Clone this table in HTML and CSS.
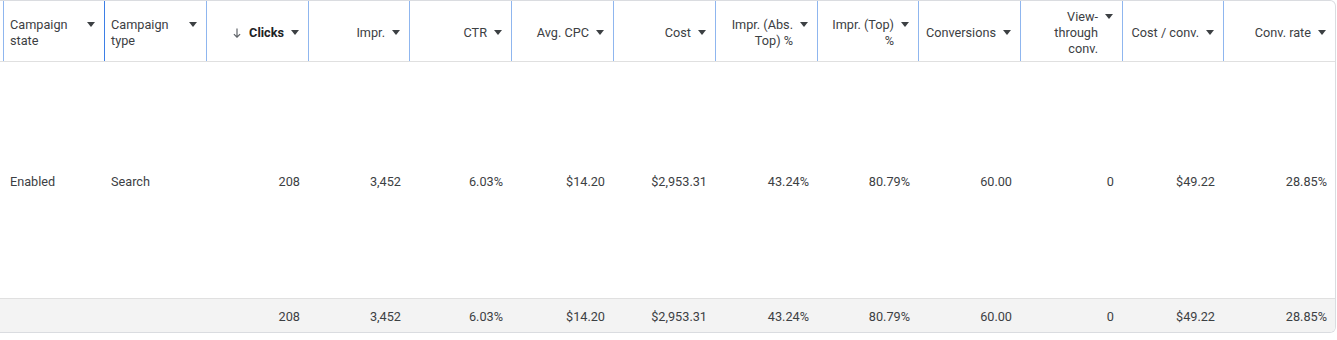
FILE: index.html
```html
<!DOCTYPE html>
<html>
<head>
<meta charset="utf-8">
<title>Campaigns</title>
<link rel="stylesheet" href="styles.css">
</head>
<body>
<div class="card">
  <div class="row head">
    <div class="lead"></div>
    <div class="th left"><div class="hwrap"><span class="label">Campaign state</span><i class="caret"></i></div></div>
    <div class="th left edge-dark"><div class="hwrap"><span class="label">Campaign type</span><i class="caret"></i></div></div>
    <div class="th"><div class="hwrap"><svg class="sort" viewBox="0 0 8 10" width="8" height="10"><path d="M4 0.5V9.2M0.9 6.1L4 9.2L7.1 6.1" fill="none" stroke="#5f6368" stroke-width="1.2"/></svg><span class="label bold">Clicks</span><i class="caret"></i></div></div>
    <div class="th"><div class="hwrap"><span class="label">Impr.</span><i class="caret"></i></div></div>
    <div class="th"><div class="hwrap"><span class="label">CTR</span><i class="caret"></i></div></div>
    <div class="th"><div class="hwrap"><span class="label">Avg. CPC</span><i class="caret"></i></div></div>
    <div class="th"><div class="hwrap"><span class="label">Cost</span><i class="caret"></i></div></div>
    <div class="th"><div class="hwrap"><span class="label">Impr. (Abs. Top) %</span><i class="caret"></i></div></div>
    <div class="th"><div class="hwrap"><span class="label">Impr. (Top) %</span><i class="caret"></i></div></div>
    <div class="th"><div class="hwrap"><span class="label">Conversions</span><i class="caret"></i></div></div>
    <div class="th"><div class="hwrap"><span class="label">View-through conv.</span><i class="caret"></i></div></div>
    <div class="th"><div class="hwrap"><span class="label">Cost / conv.</span><i class="caret"></i></div></div>
    <div class="th"><div class="hwrap"><span class="label">Conv. rate</span><i class="caret"></i></div></div>
  </div>
  <div class="row body">
    <div class="lead"></div>
    <div class="td left">Enabled</div>
    <div class="td left">Search</div>
    <div class="td">208</div>
    <div class="td">3,452</div>
    <div class="td">6.03%</div>
    <div class="td">$14.20</div>
    <div class="td">$2,953.31</div>
    <div class="td">43.24%</div>
    <div class="td">80.79%</div>
    <div class="td">60.00</div>
    <div class="td">0</div>
    <div class="td">$49.22</div>
    <div class="td">28.85%</div>
  </div>
  <div class="row foot">
    <div class="lead"></div>
    <div class="td left"></div>
    <div class="td left"></div>
    <div class="td">208</div>
    <div class="td">3,452</div>
    <div class="td">6.03%</div>
    <div class="td">$14.20</div>
    <div class="td">$2,953.31</div>
    <div class="td">43.24%</div>
    <div class="td">80.79%</div>
    <div class="td">60.00</div>
    <div class="td">0</div>
    <div class="td">$49.22</div>
    <div class="td">28.85%</div>
  </div>
</div>
</body>
</html>
```

FILE: styles.css
```css
* { box-sizing: border-box; }
html, body { margin: 0; padding: 0; background: #ffffff; }
body {
  font-family: Roboto, "Liberation Sans", Arial, sans-serif;
  font-size: 12.7px;
  color: #3c4043;
}
.card {
  width: 1336px;
  border: 1px solid #dadce0;
  border-left: none;
  border-radius: 0 6px 6px 0;
  overflow: hidden;
  background: #fff;
}
.row {
  display: grid;
  grid-template-columns: 3px 101px 102px 102px 101px 102px 102px 102px 102px 101px 102px 102px 101px 1fr;
}
.head {
  height: 61px;
  border-bottom: 1px solid #e0e0e0;
}
.body {
  height: 236px;
}
.foot {
  height: 34px;
  border-top: 1px solid #e0e0e0;
  background: #f3f3f3;
}
.th {
  display: flex;
  align-items: center;
  justify-content: flex-end;
  border-left: 1px solid #8fb6ef;
  padding: 4px 9px 0 6px;
}
.th.edge-dark { border-left-color: #3d7fe6; }
.hwrap {
  display: flex;
  align-items: flex-start;
  gap: 7px;
}
.th.left .hwrap {
  width: 100%;
  justify-content: space-between;
}
.label {
  line-height: 16px;
  max-width: 71px;
  text-align: right;
}
.th.left .label { text-align: left; }
.label.bold {
  font-weight: 700;
  color: #202124;
}
.caret {
  flex: none;
  width: 0;
  height: 0;
  margin-top: 4.5px;
  border-left: 4.5px solid transparent;
  border-right: 4.5px solid transparent;
  border-top: 5px solid #3c4043;
}
.sort {
  flex: none;
  margin-top: 3px;
  margin-right: 1px;
}
.td {
  display: flex;
  align-items: center;
  justify-content: flex-end;
  padding: 2px 8px 0;
  white-space: nowrap;
}
.td.left {
  justify-content: flex-start;
  padding-left: 7px;
}
```
